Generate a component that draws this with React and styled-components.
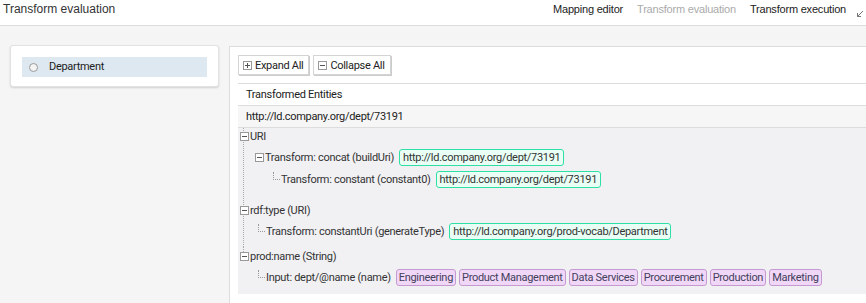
import React from "react";
import styled, { createGlobalStyle } from "styled-components";

const GlobalStyle = createGlobalStyle`
  html, body {
    margin: 0;
    padding: 0;
    background: #f5f5f5;
    font-family: Roboto, "Liberation Sans", Arial, sans-serif;
    color: #333;
    overflow: hidden;
  }
`;

const Page = styled.div`
  width: 866px;
  height: 303px;
  display: flex;
  flex-direction: column;
  overflow: hidden;
`;

const Header = styled.div`
  height: 25px;
  flex: none;
  background: #fff;
  border-bottom: 1px solid #ddd;
  display: flex;
  align-items: center;
  justify-content: space-between;
  padding: 0 2px 0 3px;
  box-sizing: content-box;
  font-family: "Liberation Sans", Arial, sans-serif;
`;

const Title = styled.div`
  font-size: 12px;
  color: #333;
  margin-top: -8px;
`;

const Nav = styled.div`
  display: flex;
  align-items: center;
  gap: 14px;
  margin-top: -8px;
`;

const NavLink = styled.span`
  font-size: 11px;
  letter-spacing: -0.2px;
  color: ${p => (p.active ? "#aaa" : "#222")};
`;

const Main = styled.div`
  flex: 1;
  display: flex;
  align-items: flex-start;
  gap: 10px;
  padding: 19px 0 0 10px;
  min-height: 0;
`;

const Sidebar = styled.div`
  width: 209px;
  flex: none;
  background: #fff;
  border: 1px solid #e2e2e2;
  border-radius: 3px;
  box-shadow: 0 1px 2px rgba(0, 0, 0, 0.15);
  padding: 11px 11px 9px;
  box-sizing: border-box;
`;

const EntityItem = styled.div`
  height: 20px;
  box-sizing: border-box;
  padding: 0 0 2px 7px;
  background: #dde8f0;
  display: flex;
  align-items: center;
  gap: 11px;
  font-size: 11px;
  letter-spacing: -0.3px;
  color: #222;
`;

const Radio = styled.span`
  width: 7px;
  height: 7px;
  margin-top: 2px;
  border: 1px solid #999;
  border-radius: 50%;
  background: #f4f4f4;
`;

const Panel = styled.div`
  flex: 1;
  align-self: stretch;
  margin-top: 1px;
  background: #fff;
  border-top: 1px solid #ddd;
  border-left: 1px solid #ddd;
  padding: 8px 0 0 8px;
  display: flex;
  flex-direction: column;
  font-size: 11px;
  letter-spacing: -0.3px;
`;

const Toolbar = styled.div`
  display: flex;
  gap: 4px;
  padding-bottom: 8px;
  border-bottom: 1px solid #ddd;
`;

const ToolButton = styled.button`
  height: 20px;
  display: flex;
  align-items: center;
  gap: 3px;
  padding: 0 5px 0 4px;
  background: #fff;
  border: 1px solid #d4d4d4;
  box-shadow: 1px 1px 0 #ccc;
  font-family: Roboto, sans-serif;
  font-size: 11px;
  letter-spacing: -0.3px;
  color: #222;
`;

const BoxIcon = styled.span`
  width: 7px;
  height: 7px;
  border: 1px solid #999;
  position: relative;
  flex: none;
  background: #fff;
  &::before {
    content: "";
    position: absolute;
    left: 1px;
    right: 1px;
    top: 3px;
    height: 1px;
    background: #555;
  }
  &::after {
    content: "";
    position: absolute;
    top: 1px;
    bottom: 1px;
    left: 3px;
    width: 1px;
    background: #555;
    display: ${p => (p.plus ? "block" : "none")};
  }
`;

const TableRow = styled.div`
  height: 21px;
  display: flex;
  align-items: center;
  padding-left: 8px;
  color: #222;
  background: ${p => (p.shaded ? "#f6f6f6" : "#fff")};
  border-bottom: 1px solid #ddd;
`;

const Tree = styled.div`
  background: #f1f1f4;
  padding: 0 0 6px 2px;
  color: #333;
`;

const Group = styled.div`
  position: relative;
  overflow: hidden;
  margin-top: ${p => p.lift || 0}px;
  padding-bottom: ${p => p.gap || 0}px;
`;

const TopLine = styled.span`
  position: absolute;
  left: 3px;
  top: ${p => p.top}px;
  height: ${p => p.h}px;
  border-left: 1px dotted #aaa;
`;

const Row = styled.div`
  height: ${p => (p.tall ? 23 : 21)}px;
  display: flex;
  align-items: center;
  padding-left: ${p => p.indent}px;
  position: relative;
`;

const Elbow = styled.span`
  width: 6px;
  height: 7px;
  margin: -8px 0 0 3px;
  border-left: 1px dotted #999;
  border-bottom: 1px dotted #999;
  flex: none;
`;

const Label = styled.span`
  margin-left: 1px;
  margin-right: 5px;
  white-space: nowrap;
`;

const Badge = styled.span`
  display: inline-flex;
  align-items: center;
  height: 15px;
  padding: 0 ${p => (p.kind === "value" ? 2 : 3)}px;
  margin-right: 3px;
  border-radius: 3px;
  white-space: nowrap;
  border: 1px solid ${p => (p.kind === "value" ? "#c59ad0" : "#2ee0a4")};
  background: ${p => (p.kind === "value" ? "#f1d7f7" : "#e9fff5")};
  color: ${p => (p.kind === "value" ? "#43405c" : "#333")};
`;

const Arrow = () => (
  <svg width="8" height="8" viewBox="0 0 8 8" style={{ marginTop: 10, marginLeft: -4 }}>
    <path d="M7 1 L1.5 6.5 M1.5 3 V6.5 H5" stroke="#777" strokeWidth="1" fill="none" />
  </svg>
);

const names = ["Engineering", "Product Management", "Data Services", "Procurement", "Production", "Marketing"];
const deptUri = "http://ld.company.org/dept/73191";

export default function App() {
  return (
    <Page>
      <GlobalStyle />
      <Header>
        <Title>Transform evaluation</Title>
        <Nav>
          <NavLink>Mapping editor</NavLink>
          <NavLink active>Transform evaluation</NavLink>
          <NavLink>Transform execution</NavLink>
          <Arrow />
        </Nav>
      </Header>
      <Main>
        <Sidebar>
          <EntityItem>
            <Radio />
            Department
          </EntityItem>
        </Sidebar>
        <Panel>
          <Toolbar>
            <ToolButton><BoxIcon plus />Expand All</ToolButton>
            <ToolButton><BoxIcon />Collapse All</ToolButton>
          </Toolbar>
          <TableRow>Transformed Entities</TableRow>
          <TableRow shaded>{deptUri}</TableRow>
          <Tree>
            <Group lift={-2} gap={9}>
              <TopLine top={2} h={999} />
              <Row indent={0}>
                <BoxIcon />
                <Label>URI</Label>
              </Row>
              <Row indent={15}>
                <BoxIcon />
                <Label>Transform: concat (buildUri)</Label>
                <Badge>{deptUri}</Badge>
              </Row>
              <Row indent={30} tall>
                <Elbow />
                <Label>Transform: constant (constant0)</Label>
                <Badge>{deptUri}</Badge>
              </Row>
            </Group>
            <Group gap={4}>
              <TopLine top={0} h={999} />
              <Row indent={0}>
                <BoxIcon />
                <Label>rdf:type (URI)</Label>
              </Row>
              <Row indent={15}>
                <Elbow />
                <Label>Transform: constantUri (generateType)</Label>
                <Badge>http://ld.company.org/prod-vocab/Department</Badge>
              </Row>
            </Group>
            <Group>
              <TopLine top={0} h={6} />
              <Row indent={0}>
                <BoxIcon />
                <Label>prod:name (String)</Label>
              </Row>
              <Row indent={15}>
                <Elbow />
                <Label>Input: dept/@name (name)</Label>
                {names.map(n => (
                  <Badge kind="value" key={n}>{n}</Badge>
                ))}
              </Row>
            </Group>
          </Tree>
        </Panel>
      </Main>
    </Page>
  );
}
